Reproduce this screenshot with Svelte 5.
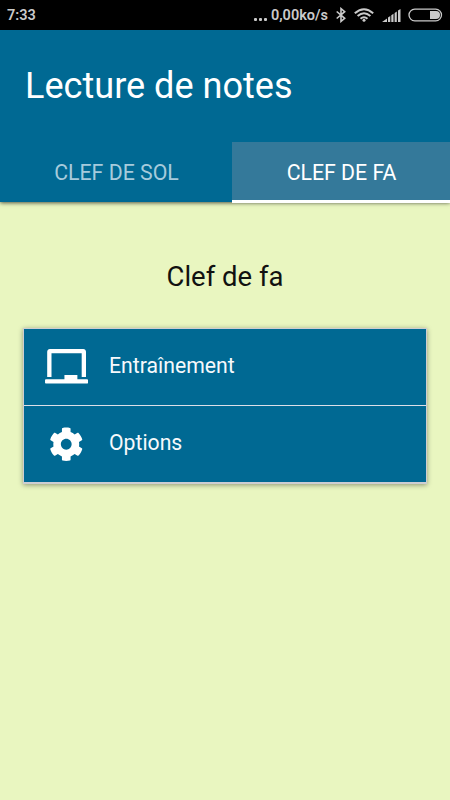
<script>
  const tabs = [
    { label: 'CLEF DE SOL', active: false },
    { label: 'CLEF DE FA', active: true }
  ];
  const items = [
    {
      label: 'Entraînement',
      width: 43.2,
      box: '0 0 640 512',
      path: 'M96 64h448v352h64V40c0-22.06-17.94-40-40-40H72C49.94 0 32 17.94 32 40v376h64V64zm528 384H480v-64H288v64H16c-8.84 0-16 7.16-16 16v32c0 8.84 7.16 16 16 16h608c8.84 0 16-7.16 16-16v-32c0-8.84-7.16-16-16-16z'
    },
    {
      label: 'Options',
      width: 34.5,
      box: '0 0 512 512',
      path: 'M487.4 315.7l-42.6-24.6c4.3-23.2 4.3-47 0-70.2l42.6-24.6c4.9-2.8 7.1-8.6 5.5-14-11.1-35.6-30-67.8-54.7-94.6-3.8-4.1-10-5.1-14.8-2.3L380.8 110c-17.9-15.4-38.5-27.3-60.8-35.1V25.8c0-5.6-3.9-10.5-9.4-11.7-36.7-8.2-74.3-7.8-109.2 0-5.5 1.2-9.4 6.1-9.4 11.7V75c-22.2 7.9-42.8 19.8-60.8 35.1L88.7 85.5c-4.9-2.8-11-1.9-14.8 2.3-24.7 26.7-43.6 58.9-54.7 94.6-1.7 5.4.6 11.2 5.5 14L67.3 221c-4.3 23.2-4.3 47 0 70.2l-42.6 24.6c-4.9 2.8-7.1 8.6-5.5 14 11.1 35.6 30 67.8 54.7 94.6 3.8 4.1 10 5.1 14.8 2.3l42.6-24.6c17.9 15.4 38.5 27.3 60.8 35.1v49.2c0 5.6 3.9 10.5 9.4 11.7 36.7 8.2 74.3 7.8 109.2 0 5.5-1.2 9.4-6.1 9.4-11.7v-49.2c22.2-7.9 42.8-19.8 60.8-35.1l42.6 24.6c4.9 2.8 11 1.9 14.8-2.3 24.7-26.7 43.6-58.9 54.7-94.6 1.5-5.5-.7-11.3-5.6-14.1zM256 336c-44.1 0-80-35.9-80-80s35.9-80 80-80 80 35.9 80 80-35.9 80-80 80z'
    }
  ];
</script>

<div class="screen">
  <div class="status">
    <span class="time">7:33</span>
    <span class="dots"><i></i><i></i><i></i></span>
    <span class="speed">0,00ko/s</span>
    <svg class="bt" width="10" height="16" viewBox="0 0 10 16" fill="none" stroke="#cacaca" stroke-width="1.6">
      <path d="M.7 4.500L8.700 11.300 5 14.400V1.600l3.700 3.100L.7 11.500" />
    </svg>
    <svg class="wifi" width="20" height="14" viewBox="0 0 20 14" fill="none" stroke="#cacaca" stroke-width="2">
      <path d="M.8 5.200Q10-2.800 19.200 5.200M3.600 8.100Q10 2.500 16.400 8.100M6.500 10.800Q10 7.600 13.500 10.800" />
      <circle cx="10" cy="12.300" r="1.500" fill="#cacaca" stroke="none" />
    </svg>
    <svg class="signal" width="19" height="13" viewBox="0 0 19 13" fill="#cacaca">
      <path d="M0 13L5 9.500V13zM6 13V8.500l2.300-1.600V13zM9.300 13V6.300l2.200-1.500V13zM12.600 13V4l2.200-1.500V13zM16 13V1.600L18.500 0v13z" />
    </svg>
    <svg class="battery" width="35" height="14" viewBox="0 0 35 14">
      <rect x="1" y="1.200" width="32.500" height="11.600" rx="5.800" fill="none" stroke="#cacaca" stroke-width="1.300" />
      <path d="M22 3h6a4 4 0 0 1 0 8H22z" fill="#cacaca" />
    </svg>
  </div>

  <header>
    <h1>Lecture de notes</h1>
    <nav>
      {#each tabs as tab}
        <div class="tab" class:active={tab.active}><span>{tab.label}</span></div>
      {/each}
    </nav>
  </header>

  <main>
    <h2>Clef de fa</h2>
    <div class="list">
      {#each items as item}
        <div class="item">
          <div class="icon">
            <svg width={item.width} height="34.5" viewBox={item.box} fill="#fff"><path d={item.path} /></svg>
          </div>
          <span>{item.label}</span>
        </div>
      {/each}
    </div>
  </main>
</div>

<style>
  :global(body) {
    margin: 0;
  }
  .screen {
    width: 450px;
    height: 800px;
    overflow: hidden;
    display: flex;
    flex-direction: column;
    background: #e9f6c0;
    font-family: Roboto, sans-serif;
  }
  .status {
    height: 30px;
    flex: none;
    box-sizing: border-box;
    padding: 0 7px;
    display: flex;
    align-items: center;
    background: #000;
    color: #cacaca;
    font-size: 14.5px;
    font-weight: 600;
    line-height: 30px;
  }
  .time {
    flex: 1;
    padding-top: 2px;
  }
  .dots {
    display: flex;
    gap: 2px;
    margin: 9px 4px 0 0;
  }
  .dots i {
    width: 3px;
    height: 3px;
    border-radius: 1px;
    background: #cacaca;
  }
  .speed {
    padding-top: 2px;
  }
  .bt {
    margin-left: 8px;
  }
  .wifi {
    margin-left: 8px;
  }
  .signal {
    margin: 1px 0 0 8px;
  }
  .battery {
    margin-left: 7px;
  }
  header {
    flex: none;
    height: 172px;
    display: flex;
    flex-direction: column;
    background: #006993;
    box-shadow: 0 1px 4px rgba(0, 0, 0, 0.65);
  }
  h1 {
    margin: 0;
    height: 112px;
    padding-left: 25px;
    line-height: 112px;
    font-size: 36.1px;
    font-weight: 400;
    color: #fff;
  }
  nav {
    display: flex;
    height: 61px;
  }
  .tab {
    width: 232px;
    box-sizing: border-box;
    padding-left: 1px;
    text-align: center;
    font-size: 21.3px;
    line-height: 61px;
    color: #a6cbdc;
  }
  .active {
    width: 218px;
    color: #fff;
    background: #34799a;
    border-bottom: 3px solid #fff;
  }
  main {
    padding: 0 23px;
  }
  h2 {
    margin: 0;
    padding-top: 58px;
    height: 68px;
    line-height: 34px;
    text-align: center;
    font-size: 27.5px;
    font-weight: 400;
    color: #111;
  }
  .list {
    border: 1px solid #cdced2;
    border-bottom-width: 2px;
    background: #006993;
    box-shadow: 0 1px 5px rgba(0, 0, 0, 0.4);
  }
  .item {
    height: 76px;
    display: flex;
    align-items: center;
    color: #f6f9fc;
    font-size: 21.2px;
  }
  .item span {
    padding-bottom: 3px;
  }
  .item + .item {
    border-top: 1px solid #dcdfe8;
  }
  .icon {
    width: 85px;
    display: flex;
    justify-content: center;
  }
  .icon svg {
    display: block;
  }
  .item:first-child svg {
    margin-bottom: 1px;
  }
</style>
